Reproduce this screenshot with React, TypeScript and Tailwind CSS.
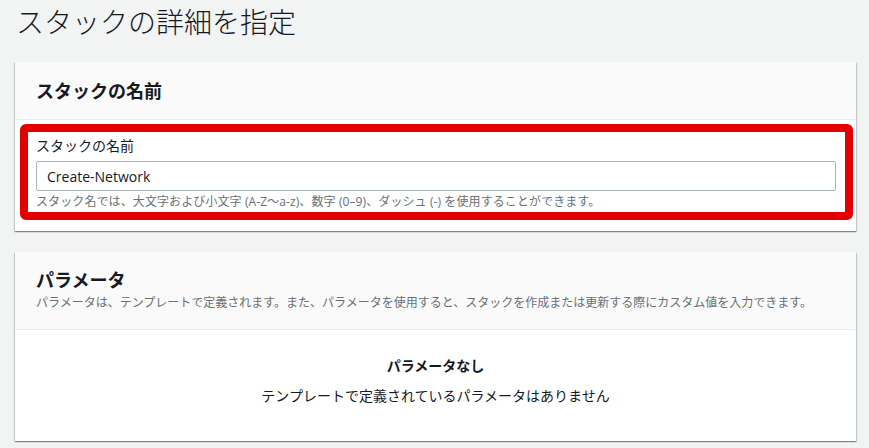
import React from "react";

const font = { fontFamily: '"Open Sans", "Noto Sans CJK JP", sans-serif' };

export default function App() {
  return (
    <div
      className="w-[869px] h-[448px] overflow-hidden bg-[#f2f3f3] pl-[15px] pr-[13px] text-[#16191f]"
      style={font}
    >
      <h1 className="pt-[2px] pl-[1px] h-[62px] text-[28px] leading-[40px] font-light text-[#16191f]">
        スタックの詳細を指定
      </h1>

      <div className="bg-white shadow-[0_1px_1px_0_rgba(0,28,36,0.3),1px_1px_1px_0_rgba(0,28,36,0.15),-1px_1px_1px_0_rgba(0,28,36,0.15)]">
        <div className="h-[58px] bg-[#fafafa] border-b border-[#eaeded] pl-[21px] flex items-center">
          <h2 className="text-[18px] font-bold leading-[22px] pt-[1px]">スタックの名前</h2>
        </div>
        <div className="pt-[4px] pl-[5px] pr-[3px] pb-[11px]">
          <div className="border-[8px] border-[#e50000] rounded-[6px] pl-[8px] pr-[9px] pt-[3px] pb-[1px]">
            <label className="block text-[14px] leading-[22px] text-[#16191f]">スタックの名前</label>
            <div className="mt-[4px] h-[30px] border border-[#aab7b8] rounded-[2px] flex items-center pl-[10px] text-[14px]">
              Create-Network
            </div>
            <p className="mt-[2px] text-[12px] leading-[18px] text-[#687078] tracking-[0.1px]">
              スタック名では、大文字および小文字 (A-Z〜a-z)、数字 (0–9)、ダッシュ (-) を使用することができます。
            </p>
          </div>
        </div>
      </div>

      <div className="mt-[21px] bg-white shadow-[0_1px_1px_0_rgba(0,28,36,0.3),1px_1px_1px_0_rgba(0,28,36,0.15),-1px_1px_1px_0_rgba(0,28,36,0.15)]">
        <div className="h-[78px] bg-[#fafafa] border-b border-[#eaeded] pl-[21px] pt-[16px]">
          <h2 className="text-[18px] font-bold leading-[24px]">パラメータ</h2>
          <p className="text-[12px] leading-[18px] text-[#687078] mt-[2px]">
            パラメータは、テンプレートで定義されます。また、パラメータを使用すると、スタックを作成または更新する際にカスタム値を入力できます。
          </p>
        </div>
        <div className="h-[111px] flex flex-col items-center pt-[25px]">
          <div className="text-[14px] font-bold leading-[22px]">パラメータなし</div>
          <div className="text-[14px] leading-[22px] mt-[8px]">テンプレートで定義されているパラメータはありません</div>
        </div>
      </div>
    </div>
  );
}
